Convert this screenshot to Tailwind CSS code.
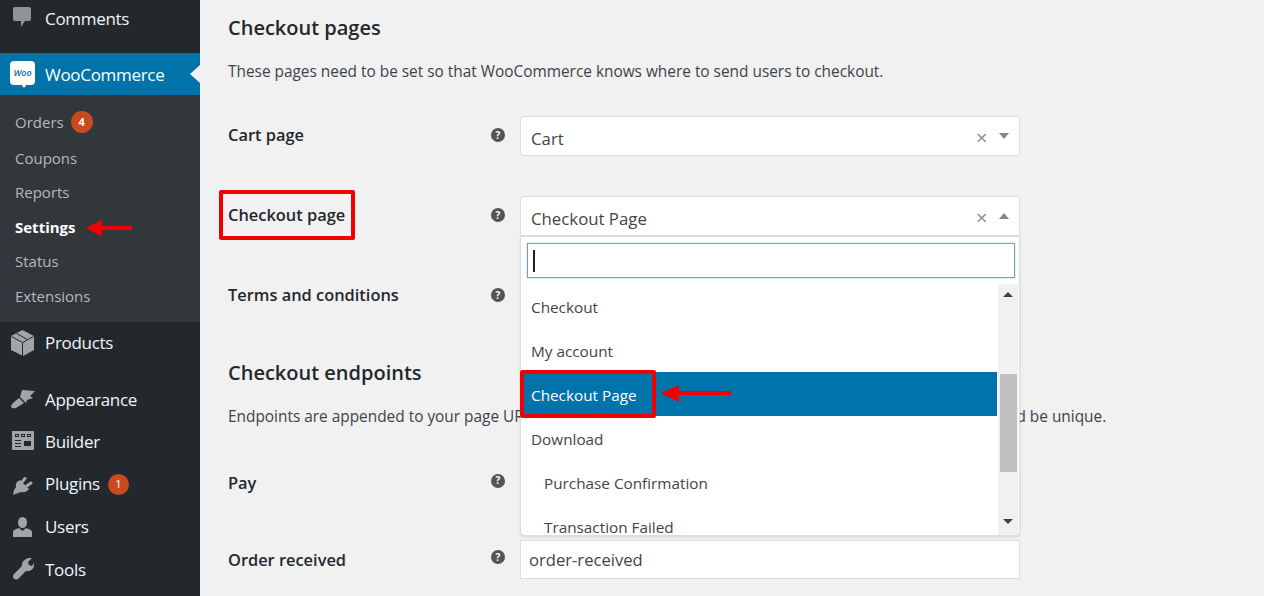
<!DOCTYPE html>
<html lang="en">
<head>
    <meta charset="UTF-8">
    <title>Checkout settings</title>
    <script src="https://cdn.jsdelivr.net/npm/@tailwindcss/browser@4"></script>
</head>
<body class="bg-[#f1f1f1] font-['Open_Sans',sans-serif] text-[#23282d] overflow-hidden">
<div class="relative flex w-[1264px] h-[596px] overflow-hidden">

    <!-- Sidebar -->
    <aside class="w-[200px] h-[596px] shrink-0 bg-[#23282d] text-[#f0f5fa] text-[17px] tracking-[-0.3px]">
        <div class="relative flex items-center h-[37px] pl-[45px]">
            <svg class="absolute left-[13px] top-[7px]" width="18" height="20" viewBox="0 0 18 20"><path fill="#8f9499" d="M2 0h14q2 0 2 2v10q0 2-2 2h-4l-4 6v-6H2q-2 0-2-2V2q0-2 2-2z"/></svg>
            <span>Comments</span>
        </div>
        <div class="h-[16px]"></div>
        <div class="relative flex items-center h-[42px] pt-[1px] pl-[45px] bg-[#0073aa] text-white">
            <div class="absolute left-[10px] top-[8px] w-[25px] h-[24px] bg-white rounded-[4px] flex items-center justify-center text-[#0073aa] text-[9px] font-semibold italic tracking-normal">Woo</div>
            <div class="absolute left-[21px] top-[31px] w-0 h-0 border-l-[3px] border-r-[3px] border-t-[4px] border-l-transparent border-r-transparent border-t-white"></div>
            <span>WooCommerce</span>
            <div class="absolute right-0 top-[12px] w-0 h-0 border-y-[9px] border-r-[10px] border-y-transparent border-r-[#f1f1f1]"></div>
        </div>
        <div class="h-[227px] bg-[#32373c] text-[#b4b9be] text-[15px] tracking-normal pl-[15px] pt-[10px]">
            <div class="flex items-center h-[34px]">Orders<span class="ml-[7px] w-[22px] h-[22px] rounded-full bg-[#ca4a1f] text-white text-[11px] font-bold flex items-center justify-center">4</span></div>
            <div class="flex items-center h-[35px] mt-[2px]">Coupons</div>
            <div class="flex items-center h-[34px] -mt-px">Reports</div>
            <div class="flex items-center h-[35px] mt-px text-white font-bold">Settings</div>
            <div class="flex items-center h-[34px] -mt-px">Status</div>
            <div class="flex items-center h-[35px] mt-px">Extensions</div>
        </div>
        <div class="relative flex items-center h-[42px] pl-[45px]">
            <svg class="absolute left-[11px] top-[8px]" width="23" height="26" viewBox="0 0 23 26"><path fill="#a0a5aa" d="M11.5 0L23 6v14l-11 6L0 20V6z"/><path fill="none" stroke="#23282d" stroke-width="1" d="M0.5 6.5l11 6 11-6M11.5 12.5V26M5.5 3.5l11 6"/></svg>
            <span>Products</span>
        </div>
        <div class="relative flex items-center h-[42px] mt-[15px] pl-[45px]">
            <svg class="absolute left-[11px] top-[9px]" width="24" height="21" viewBox="0 0 24 21"><path fill="#a0a5aa" d="M11 2L24 3l-5 5 3 2-6 2-1 3-6-6zM8 10l5 5-8 5q-4 1-5-1 0-2 2-4z"/></svg>
            <span>Appearance</span>
        </div>
        <div class="relative flex items-center h-[42px] pl-[45px]">
            <svg class="absolute left-[12px] top-[10px]" width="22" height="19" viewBox="0 0 22 19"><path fill="#a0a5aa" d="M1 0h20q1 0 1 1v17q0 1-1 1H1q-1 0-1-1V1q0-1 1-1z"/><path fill="#23282d" d="M3 3h4v3H3zM9 3h4v3H9zM15 3h4v3h-4zM3 9h6v1H3zM3 12h6v1H3zM3 15h6v1H3zM12 10h7v5h-7z"/><path fill="#a0a5aa" d="M4 4h2v1H4zM10 4h2v1h-2zM16 4h2v1h-2z"/></svg>
            <span>Builder</span>
        </div>
        <div class="relative flex items-center h-[42px] pl-[45px]">
            <svg class="absolute left-[13px] top-[14px]" width="20" height="18" viewBox="0 0 20 18"><path fill="#a0a5aa" d="M7 3l9 9-2 2q-3 2-6 1l-3 1-5 2 1-5 2-3q-1-3 1-5z"/><path fill="none" stroke="#a0a5aa" stroke-width="3" stroke-linecap="round" d="M9 5l3-3.5M13 9.500l5-3.500"/></svg>
            <span>Plugins</span>
            <span class="ml-[8px] w-[21px] h-[21px] rounded-full bg-[#ca4a1f] text-white text-[11px] tracking-normal flex items-center justify-center">1</span>
        </div>
        <div class="relative flex items-center h-[44px] pl-[45px]">
            <svg class="absolute left-[13px] top-[12px]" width="19" height="20" viewBox="0 0 19 20"><ellipse fill="#a0a5aa" cx="9.500" cy="5.500" rx="4.500" ry="5.500"/><path fill="#a0a5aa" d="M0 20v-5c0-2 3-3 6-4l3.500 3L13 11c3 1 6 2 6 4v5z"/></svg>
            <span>Users</span>
        </div>
        <div class="relative flex items-center h-[42px] pl-[45px]">
            <svg class="absolute left-[12px] top-[9px]" width="22" height="22" viewBox="0 0 22 22"><path fill="#a0a5aa" d="M20 0l-4 4 1 3 3 1 2-3c1 5-3 9-8 8l-8 8c-2 1-5 0-5-2 0-1 0-2 1-3l8-8C9 4 14-1 20 0z"/></svg>
            <span>Tools</span>
        </div>
    </aside>

    <!-- Main content -->
    <main class="flex-1 pl-[28px]">
        <h2 class="h-[56px] flex items-center text-[20px] font-semibold">Checkout pages</h2>
        <p class="h-[30px] pt-[2px] flex items-center text-[15.4px] text-[#3c434a]">These pages need to be set so that WooCommerce knows where to send users to checkout.</p>

        <div class="flex items-center h-[40px] mt-[30px] w-[792px]">
            <label class="w-[263px] text-[16.4px] font-semibold -mt-[1px]">Cart page</label>
            <span class="w-[14px] h-[14px] rounded-full bg-[#555] text-white text-[10px] font-bold flex items-center justify-center -mt-[2px]">?</span>
            <div class="relative ml-[15px] w-[500px] h-[40px] pt-[5px] bg-white border border-[#ddd] rounded-[4px] flex items-center pl-[10px] text-[16.800px] text-[#444]">Cart
                <span class="absolute left-[455px] top-[8px] leading-[26px] text-[#888] text-[20px]">×</span>
                <span class="absolute left-[478px] top-[16px] w-0 h-0 border-x-[5px] border-t-[6px] border-x-transparent border-t-[#888]"></span>
            </div>
        </div>

        <div class="flex items-center h-[40px] mt-[40px] w-[792px]">
            <label class="w-[263px] text-[16.4px] font-semibold -mt-[1px]">Checkout page</label>
            <span class="w-[14px] h-[14px] rounded-full bg-[#555] text-white text-[10px] font-bold flex items-center justify-center -mt-[2px]">?</span>
            <div class="relative ml-[15px] w-[500px] h-[40px] pt-[5px] bg-white border border-[#ddd] rounded-t-[4px] flex items-center pl-[10px] text-[16.800px] text-[#444]">Checkout Page
                <span class="absolute left-[455px] top-[8px] leading-[26px] text-[#888] text-[20px]">×</span>
                <span class="absolute left-[478px] top-[16px] w-0 h-0 border-x-[5px] border-b-[6px] border-x-transparent border-b-[#888]"></span>
            </div>
        </div>

        <div class="flex items-center h-[40px] mt-[40px] w-[792px]">
            <label class="w-[263px] text-[16.4px] font-semibold -mt-[1px]">Terms and conditions</label>
            <span class="w-[14px] h-[14px] rounded-full bg-[#555] text-white text-[10px] font-bold flex items-center justify-center -mt-[2px]">?</span>
        </div>

        <h2 class="flex items-center h-[40px] mt-[37px] text-[20px] font-semibold">Checkout endpoints</h2>
        <p class="flex items-center h-[30px] mt-[9px] text-[15.4px] text-[#3c434a] whitespace-nowrap">Endpoints are appended to your page URLs to handle specific actions during the checkout process. They should be unique.</p>

        <div class="flex items-center h-[40px] mt-[31px] w-[792px]">
            <label class="w-[263px] text-[16.4px] font-semibold">Pay</label>
            <span class="w-[14px] h-[14px] rounded-full bg-[#555] text-white text-[10px] font-bold flex items-center justify-center -mt-[5px]">?</span>
        </div>

        <div class="flex items-center h-[40px] mt-[37px] w-[792px]">
            <label class="w-[263px] text-[16.4px] font-semibold">Order received</label>
            <span class="w-[14px] h-[14px] rounded-full bg-[#555] text-white text-[10px] font-bold flex items-center justify-center -mt-[6px]">?</span>
            <div class="ml-[15px] w-[500px] h-[39px] -mt-[2px] pt-[2px] bg-white border border-[#ddd] flex items-center pl-[8px] text-[16.600px] text-[#444]">order-received</div>
        </div>
    </main>

    <!-- Open dropdown -->
    <div class="absolute left-[520px] top-[236px] w-[500px] h-[300px] bg-white border border-[#ddd] rounded-b-[4px] shadow-sm overflow-hidden">
        <div class="relative mx-[6px] mt-[6px] w-[488px] h-[35px] border border-[#7e9eb0] shadow-[0_0_2px_#a8d0e6]">
            <span class="absolute left-[5px] top-[6px] w-[2px] h-[22px] bg-[#222]"></span>
        </div>
        <div class="relative mt-[6px] text-[15.3px] text-[#444]">
            <div class="flex items-center h-[44px] pt-[2px] w-[476px] pl-[10px]">Checkout</div>
            <div class="flex items-center h-[44px] pt-[2px] w-[476px] pl-[10px]">My account</div>
            <div class="flex items-center h-[44px] pt-[2px] w-[476px] pl-[10px] bg-[#0073aa] text-white">Checkout Page</div>
            <div class="flex items-center h-[44px] pt-[2px] w-[476px] pl-[10px]">Download</div>
            <div class="flex items-center h-[44px] pt-[2px] w-[476px] pl-[23px]">Purchase Confirmation</div>
            <div class="flex items-center h-[44px] pt-[2px] w-[476px] pl-[23px]">Transaction Failed</div>
            <!-- Scrollbar -->
            <div class="absolute left-[477px] top-0 w-[20px] h-[252px] bg-[#f1f1f1]">
                <span class="absolute left-[5px] top-[8px] w-0 h-0 border-x-[5px] border-b-[5px] border-x-transparent border-b-[#444]"></span>
                <span class="absolute left-[2px] top-[90px] w-[17px] h-[98px] bg-[#c1c1c1]"></span>
                <span class="absolute left-[5px] top-[235px] w-0 h-0 border-x-[5px] border-t-[5px] border-x-transparent border-t-[#444]"></span>
            </div>
        </div>
    </div>

    <!-- Red annotations -->
    <div class="absolute left-[219px] top-[190px] w-[136px] h-[50px] border-[4px] border-[#f00000] rounded-[2px]"></div>
    <div class="absolute left-[520px] top-[370px] w-[136px] h-[48px] border-[4px] border-[#f00000] rounded-[2px]"></div>
    <svg class="absolute left-[85px] top-[219px]" width="48" height="18" viewBox="0 0 48 18"><path fill="#f00000" d="M1 9L17 1v6h30v4H17v7z"/></svg>
    <svg class="absolute left-[660px] top-[384px]" width="72" height="18" viewBox="0 0 72 18"><path fill="#f00000" d="M1 9L19 1v6h52v4H19v7z"/></svg>
</div>
</body>
</html>
